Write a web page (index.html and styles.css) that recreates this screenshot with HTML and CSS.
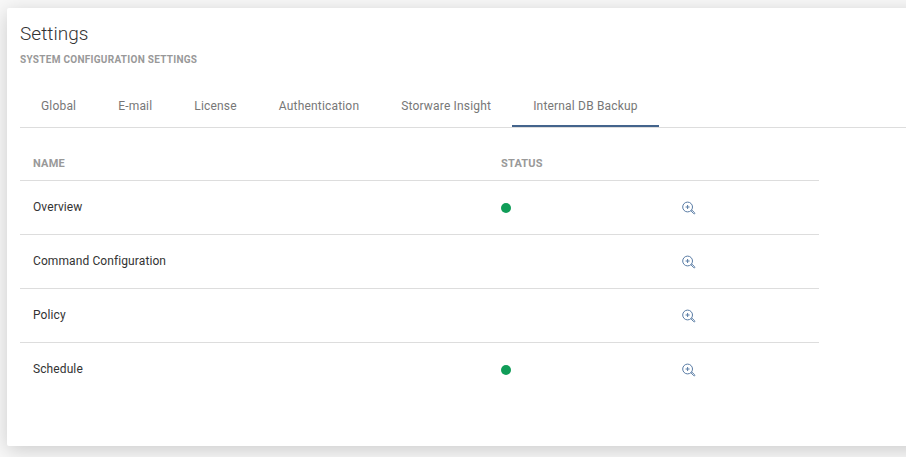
FILE: index.html
```
<!DOCTYPE html>
<html lang="en">
<head>
<meta charset="utf-8">
<title>Settings</title>
<link rel="stylesheet" href="styles.css">
</head>
<body>
<svg width="0" height="0" class="defs"><symbol id="zoom" viewBox="0 0 14 14"><circle cx="5.6" cy="6" r="4.9"/><path d="M5.6 4v4M3.6 6h4M9.2 10.2l2.6 2.5q.5.4.9 0t0-.9l-2.6-2.5z"/></symbol></svg>
<main class="card">
  <h1>Settings</h1>
  <h2>SYSTEM CONFIGURATION SETTINGS</h2>
  <nav class="tabs">
    <a>Global</a><a>E-mail</a><a>License</a><a>Authentication</a><a>Storware Insight</a><a class="active">Internal DB Backup</a>
  </nav>
  <section class="table">
    <div class="row head"><span>NAME</span><span>STATUS</span><span></span></div>
    <div class="row"><span class="name">Overview</span><i class="dot"></i><svg class="icon"><use href="#zoom"/></svg></div>
    <div class="row"><span class="name">Command Configuration</span><i></i><svg class="icon"><use href="#zoom"/></svg></div>
    <div class="row"><span class="name">Policy</span><i></i><svg class="icon"><use href="#zoom"/></svg></div>
    <div class="row"><span class="name">Schedule</span><i class="dot"></i><svg class="icon"><use href="#zoom"/></svg></div>
  </section>
</main>
</body>
</html>
```
FILE: styles.css
```
* { box-sizing: border-box; }
body { margin: 0; height: 457px; overflow: hidden; background: #f8f8f8; font-family: Roboto, sans-serif; color: #333; }
.defs { display: block; }
.card { margin: 8px 0 0 7px; width: 930px; height: 438px; padding: 13px; background: #fff; border-radius: 2px; box-shadow: 0 4px 20px rgba(0,0,0,.18); }
h1 { margin: 0; font-size: 19px; line-height: 26px; font-weight: 300; letter-spacing: .02px; }
h2 { margin: 6px 0 0; font-size: 10px; line-height: 14px; font-weight: 700; color: #999; letter-spacing: .28px; }
.tabs { display: flex; height: 61px; padding-top: 18px; border-bottom: 1px solid #ddd; }
.tabs a { height: 42px; padding: 0 21px; font-size: 12px; line-height: 42px; font-weight: 400; color: #777; letter-spacing: .18px; white-space: nowrap; }
.tabs .active { border-bottom: 2px solid #43648c; }
.table { width: 799px; padding-top: 18px; }
.row { display: grid; grid-template-columns: 468px 181px 1fr; align-items: center; height: 54px; padding-left: 13px; border-bottom: 1px solid #ddd; font-size: 12px; letter-spacing: .1px; }
.row:last-child { border-bottom: 0; }
.name { padding-bottom: 2px; }
.head { height: 35px; font-size: 11px; font-weight: 700; color: #999; letter-spacing: .2px; }
.dot { width: 10px; height: 10px; border-radius: 50%; background: #109d58; }
.icon { width: 14px; height: 14px; fill: none; stroke: #597ca5; stroke-width: 1; }
```
